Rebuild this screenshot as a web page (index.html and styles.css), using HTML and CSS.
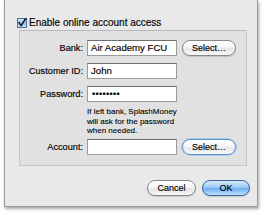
FILE: index.html
```html
<!DOCTYPE html>
<html>
<head>
<meta charset="utf-8">
<link rel="stylesheet" href="styles.css">
</head>
<body>
<div class="window">
  <div class="check-row">
    <span class="checkbox">
      <svg width="10" height="10" viewBox="0 0 10 10">
        <defs>
          <linearGradient id="cb" x1="0" y1="0" x2="0" y2="1">
            <stop offset="0" stop-color="#d8e8fa"/>
            <stop offset="0.5" stop-color="#9cc4ef"/>
            <stop offset="1" stop-color="#c8e0f8"/>
          </linearGradient>
        </defs>
        <rect x="0.5" y="0.5" width="9" height="9" fill="url(#cb)" stroke="#5a6f8c"/>
        <path d="M2 4.6 L4.1 7.6 L8.6 0.8" fill="none" stroke="#0c1a3a" stroke-width="1.6" stroke-linecap="round" stroke-linejoin="round"/>
      </svg>
    </span>
    <span class="check-label">Enable online account access</span>
  </div>
  <div class="group">
    <div class="form">
      <span class="lbl">Bank:</span>
      <div class="field">Air Academy FCU</div>
      <button class="btn select">Select…</button>

      <span class="lbl">Customer ID:</span>
      <div class="field">John</div>
      <span></span>

      <span class="lbl">Password:</span>
      <div class="field pw">••••••••</div>
      <span></span>

      <span></span>
      <p class="hint">If left bank, SplashMoney<br>will ask for the password<br>when needed.</p>
      <span></span>

      <span class="lbl">Account:</span>
      <div class="field"></div>
      <button class="btn select focus">Select…</button>
    </div>
  </div>
  <div class="actions">
    <button class="btn cancel">Cancel</button>
    <button class="btn ok">OK</button>
  </div>
</div>
</body>
</html>
```

FILE: styles.css
```css
* { box-sizing: border-box; }
html, body { margin: 0; padding: 0; background: #ffffff; }
body {
  width: 264px;
  height: 215px;
  overflow: hidden;
  font-family: "Liberation Sans", Arial, sans-serif;
  color: #000;
}
.window {
  margin-left: 4px;
  width: 254px;
  height: 207px;
  background: #e9e9e9;
  border: 1px solid #9a9a9a;
  border-top: none;
  box-shadow: 1px 2px 3px rgba(0,0,0,0.35);
  padding: 17px 10px 10px 12px;
  display: flex;
  flex-direction: column;
}
.check-row {
  display: flex;
  align-items: center;
  height: 11px;
  gap: 2px;
}
.checkbox { display: flex; width: 10px; height: 10px; }
.check-label { font-size: 10px; line-height: 11px; -webkit-text-stroke: 0.15px #000; }
.group {
  margin-top: 2px;
  margin-left: 2px;
  width: 228px;
  background: #e1e1e1;
  border: 1px solid #c6c6c6;
  border-top-color: #b9b9b9;
  padding: 9px 0 10px 0;
}
.form {
  display: grid;
  grid-template-columns: 63px 90px 54px;
  column-gap: 4px;
  row-gap: 7px;
  align-items: center;
}
.lbl {
  font-size: 9.2px;
  text-align: right;
  line-height: 16px;
  -webkit-text-stroke: 0.15px #000;
}
.field {
  height: 16px;
  background: #fff;
  border: 1px solid #9b9b9b;
  border-top-color: #6e6e6e;
  font-size: 9.6px;
  line-height: 14px;
  padding-left: 3px;
  white-space: nowrap;
  overflow: hidden;
  -webkit-text-stroke: 0.15px #000;
}
.field.pw { font-size: 9px; letter-spacing: 0.35px; padding-left: 4px; line-height: 14px; }
.hint {
  margin: -2px 0 -4px 0;
  font-size: 8px;
  line-height: 9.7px;
  white-space: nowrap;
  -webkit-text-stroke: 0.1px #000;
}
.btn {
  font-family: "Liberation Sans", Arial, sans-serif;
  font-size: 9px;
  height: 16px;
  border-radius: 8px;
  border: 1px solid #888;
  background: linear-gradient(#ffffff 0%, #f6f6f6 45%, #e6e6e6 55%, #f8f8f8 100%);
  box-shadow: 0 1px 1px rgba(0,0,0,0.15);
  padding: 0;
  color: #000;
  line-height: 14px;
  -webkit-text-stroke: 0.15px #000;
}
.select { margin-left: 1px; width: 54px; }
.focus {
  border-color: #5b8fd0;
  box-shadow: 0 0 0 1px #a9cbf0;
}
.actions {
  margin-top: 14px;
  margin-right: -3px;
  display: flex;
  justify-content: flex-end;
  gap: 6px;
}
.cancel { width: 49px; }
.ok {
  width: 48px;
  border-color: #3a63a0;
  background: linear-gradient(#d6eafd 0%, #9ccaf5 45%, #6eaef0 55%, #bfe2fc 100%);
}
```
